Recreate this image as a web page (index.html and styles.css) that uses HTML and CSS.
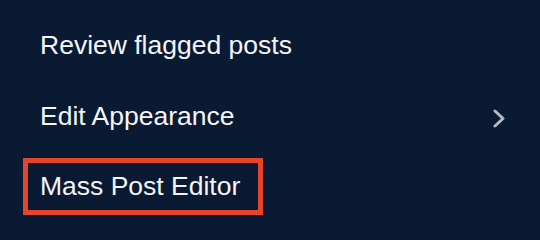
FILE: index.html
```html
<!DOCTYPE html>
<html>
<head>
<meta charset="utf-8">
<link rel="stylesheet" href="styles.css">
</head>
<body>
<ul class="menu">
  <li class="item"><span class="label">Review flagged posts</span></li>
  <li class="item"><span class="label">Edit Appearance</span>
    <svg class="chev" width="12" height="19" viewBox="0 0 12 19"><path d="M2 2 L10 9.5 L2 17" fill="none" stroke="#b3bac5" stroke-width="3" stroke-linecap="round" stroke-linejoin="round"/></svg>
  </li>
  <li class="item"><span class="label highlight">Mass Post Editor</span></li>
</ul>
</body>
</html>
```
FILE: styles.css
```css
html, body {
  margin: 0;
  padding: 0;
  background: #0a1a33;
  width: 540px;
  height: 236px;
  overflow: hidden;
}
.menu {
  list-style: none;
  margin: 0;
  padding: 10px 0 0 0;
  font-family: "Liberation Sans", Arial, sans-serif;
  font-size: 26.5px;
  color: #f4f5f7;
}
.item {
  display: flex;
  align-items: center;
  justify-content: space-between;
  height: 71px;
  padding: 0 35px 0 40px;
}
.label {
  line-height: 71px;
  white-space: nowrap;
}
.highlight {
  box-sizing: border-box;
  width: 240px;
  height: 57px;
  line-height: 47px;
  margin-left: -17px;
  margin-top: -2px;
  padding: 0 0 0 12px;
  border: 5px solid #e6442b;
}
.chev {
  display: block;
  margin-top: 3px;
}
```
